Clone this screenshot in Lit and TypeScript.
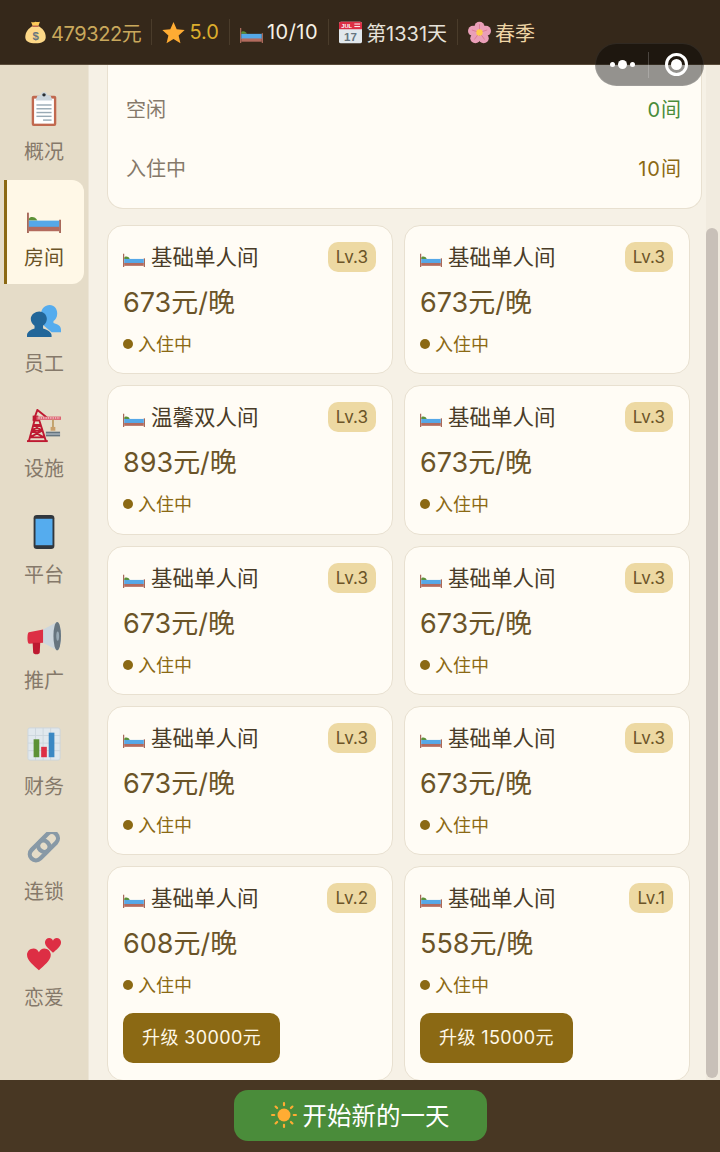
import { LitElement, html, css, svg } from "lit";
import { customElement } from "lit/decorators.js";

const bed = svg`<rect x="0" y="3" width="2" height="23" fill="#a8695a"/><rect x="34" y="11" width="2" height="15" fill="#a8695a"/><path d="M2 10c1-3 7-3 9 2H2z" fill="#5c9136"/><rect x="2" y="12" width="32" height="8" fill="#55a8e8"/><rect x="2" y="19" width="32" height="5" fill="#b36b5e"/>`;
const heart = "M12 22C7 17.500 0 12.500 0 6.500 0 2.800 3 0 6.500 0 9 0 11 1.500 12 4c1-2.500 3-4 5.500-4C21 0 24 2.800 24 6.500c0 6-7 11-12 15.500z";
const icons: Record<string, unknown> = {
  money: svg`<path d="M11 1c2 1.500 4 1 7 0 3 1 5 .5 7 0l-3 8h-8z" fill="#fdcb58"/><path d="M14 8C7 11 2 18 2 25c0 7 6 10 16 10s16-3 16-10c0-7-5-14-12-17z" fill="#fdd888"/><rect x="13" y="7" width="10" height="2.500" rx="1" fill="#bf6952"/><text x="18" y="29" font-size="18" text-anchor="middle" font-family="Liberation Sans" font-weight="700" fill="#67757f">$</text>`,
  star: svg`<path d="M18 1.500l5 11.500 12.500 1.200-9.500 8.300 2.900 12.200L18 28.300 7.100 34.700 10 22.500.5 14.200 13 13z" fill="#ffac33"/>`,
  cal: svg`<rect x="0" y="1" width="36" height="34" rx="3" fill="#e1e8ed"/><path d="M0 13V4a3 3 0 013-3h30a3 3 0 013 3v9z" fill="#dd2e44"/><rect x="24" y="4" width="9" height="1.500" fill="#fff"/><rect x="24" y="8" width="9" height="1.500" fill="#fff"/><text x="12" y="11" font-size="9" text-anchor="middle" font-family="Liberation Sans" font-weight="700" fill="#fff">JUL</text><text x="18" y="31" font-size="18" text-anchor="middle" font-family="Liberation Sans" font-weight="700" fill="#66757f">17</text>`,
  flower: svg`<g fill="#ea9fb8"><circle cx="18" cy="9" r="8"/><circle cx="8" cy="15.500" r="8"/><circle cx="28" cy="15.500" r="8"/><circle cx="11.500" cy="27" r="8"/><circle cx="24.500" cy="27" r="8"/></g><g stroke="#d9738f" stroke-width="1.200"><path d="M18 18V5M18 18L6 14M18 18l12-4M18 18L10 29M18 18l8 11"/></g><circle cx="18" cy="18" r="5" fill="#ffcc4d"/>`,
  clip: svg`<rect x="5" y="4" width="26" height="32" rx="2" fill="#c1694f"/><rect x="7.500" y="7" width="21" height="26.500" fill="#fff"/><path d="M11 4l4-1a3 3 0 016 0l4 1 2 5H9z" fill="#ccd6dd"/><circle cx="18" cy="3" r="1.800" fill="#292f33"/><g fill="#99aab5"><rect x="10" y="13" width="16" height="1.500"/><rect x="10" y="17" width="16" height="1.500"/><rect x="10" y="21" width="16" height="1.500"/><rect x="10" y="25" width="16" height="1.500"/><rect x="17" y="29" width="9" height="1.500"/></g>`,
  staff: svg`<path d="M36 27c0-4-4-6-8-7v-2c2-1 4-4 4-8 0-5-3-9-8-9s-9 4-9 9c0 3 1 6 3 7v6l8 7h10z" fill="#55acee"/><path d="M26 33c0-3-5-6-9-7v-3c2-1 4-4 4-7 0-5-4-8-8-8s-9 3-9 8c0 3 2 6 4 7v3c-4 1-8 4-8 7v2h26z" fill="#226699"/>`,
  crane: svg`<g fill="none" stroke="#be1931" stroke-width="2"><path d="M2 34L8 12h5l7 22M7 17h7M5 23h11M3 30h15M7 17l9 6M14 17l-9 6M5 23l13 7M16 23L3 30"/><path d="M7 12L11 1l10 8"/></g><rect x="0" y="33" width="22" height="2" fill="#be1931"/><rect x="6" y="7" width="6" height="6" fill="#be1931"/><rect x="10" y="8" width="26" height="3.500" fill="#dd5f6f"/><path d="M12 9.500h23" stroke="#fff" stroke-width="1" stroke-dasharray="1.500 1"/><rect x="26.500" y="11" width="2" height="10" fill="#c1a06a"/><rect x="25" y="19" width="5" height="4" fill="#c99f6a"/><rect x="20" y="24" width="15" height="5" fill="#66757f"/><rect x="20" y="26" width="15" height="1" fill="#ccd6dd"/>`,
  phone: svg`<rect x="7" y="0" width="22" height="36" rx="3.500" fill="#31373d"/><rect x="9" y="4" width="18" height="28" fill="#55acee"/>`,
  horn: svg`<path d="M15 10L32 1c2 0 4 7 4 15s-2 15-4 15L15 22z" fill="#ccd6dd"/><ellipse cx="32" cy="16" rx="4" ry="15" fill="#67757f"/><ellipse cx="32.500" cy="16" rx="1.500" ry="5" fill="#99aab5"/><path d="M2 12l15-3 0 14-15 1c-2 0-2-12 0-12z" fill="#dd2e44"/><path d="M6 23h8l-.5 10c0 3-7 3-7 0z" fill="#be1931"/>`,
  chart: svg`<rect x="1" y="1" width="34" height="34" rx="2" fill="#e1e8ed" stroke="#ccd6dd"/><g stroke="#ccd6dd" stroke-width="1"><path d="M1 9h34M1 17h34M1 25h34M9 1v34M17 1v34M25 1v34"/></g><rect x="7" y="13" width="6" height="19" fill="#5c9136"/><rect x="15" y="21" width="6" height="11" fill="#dd2e44"/><rect x="23" y="6" width="6" height="26" fill="#3b88c3"/>`,
  link: svg`<g fill="none" stroke="#8899a6" stroke-width="4.500"><rect x="-3" y="-6.500" width="24" height="13" rx="6.500" transform="translate(7 26) rotate(-45)"/><rect x="-3" y="-6.500" width="24" height="13" rx="6.500" transform="translate(16 17) rotate(-45)"/></g>`,
  love: svg`<path d="${heart}" fill="#dd2e44" transform="translate(0 11) scale(1.050)"/><path d="${heart}" fill="#dd2e44" transform="translate(19 0) scale(.71)"/>`,
  sun: svg`<circle cx="18" cy="18" r="9" fill="#ffac33"/><g fill="#ffac33"><rect x="16.500" y="0" width="3" height="6" rx="1.500"/><rect x="16.500" y="30" width="3" height="6" rx="1.500"/><rect x="0" y="16.500" width="6" height="3" rx="1.500"/><rect x="30" y="16.500" width="6" height="3" rx="1.500"/><rect x="16.500" y="0" width="3" height="6" rx="1.500" transform="rotate(45 18 18)"/><rect x="16.500" y="0" width="3" height="6" rx="1.500" transform="rotate(135 18 18)"/><rect x="16.500" y="0" width="3" height="6" rx="1.500" transform="rotate(225 18 18)"/><rect x="16.500" y="0" width="3" height="6" rx="1.500" transform="rotate(315 18 18)"/></g>`,
};

const icon = (name: string, cls: string) => html`<svg class=${cls} viewBox="0 0 36 36">${icons[name]}</svg>`;
const bedIcon = (cls: string) => html`<svg class=${cls} viewBox="0 0 36 26" preserveAspectRatio="none">${bed}</svg>`;

const NAV = [
  ["clip", "概况"], ["bed", "房间"], ["staff", "员工"], ["crane", "设施"], ["phone", "平台"],
  ["horn", "推广"], ["chart", "财务"], ["link", "连锁"], ["love", "恋爱"],
];

const ROOMS: { name: string; price: number; lv: number; up?: number }[] = [
  { name: "基础单人间", price: 673, lv: 3 }, { name: "基础单人间", price: 673, lv: 3 },
  { name: "温馨双人间", price: 893, lv: 3 }, { name: "基础单人间", price: 673, lv: 3 },
  { name: "基础单人间", price: 673, lv: 3 }, { name: "基础单人间", price: 673, lv: 3 },
  { name: "基础单人间", price: 673, lv: 3 }, { name: "基础单人间", price: 673, lv: 3 },
  { name: "基础单人间", price: 608, lv: 2, up: 30000 }, { name: "基础单人间", price: 558, lv: 1, up: 15000 },
];

@customElement("app-root")
export class AppRoot extends LitElement {
  static styles = css`
    :host { display: block; width: 720px; height: 1152px; position: relative; overflow: hidden;
      font-family: "Inter", "Noto Sans CJK SC", sans-serif; }
    * { box-sizing: border-box; }
    .page { height: 1152px; display: flex; flex-direction: column; background: #f6f1e6; }
    .header { height: 65px; flex: none; background: #35281a; display: flex; align-items: center; padding: 0 0 0 24px; gap: 10px; font-size: 20px; border-bottom: 1px solid #5a4c3a; }
    .stat { display: flex; align-items: center; gap: 4px; white-space: nowrap; height: 26px; }
    .sep { width: 1px; height: 26px; background: #4a3c2b; }
    .hi { width: 23px; height: 25px; flex: none; }
    .hbed { width: 23px; height: 17px; flex: none; margin-top: 4px; }
    .gold { color: #c9a85c; letter-spacing: -.4px; } .yellow { color: #dcae2c; } .white { color: #f6f1e6; letter-spacing: .5px; } .pale { color: #e6e2da; } .spring { color: #efd6a6; }
    .body { flex: 1; min-height: 0; display: flex; }
    .side { width: 88px; flex: none; background: #e5dcc8; padding: 9px 4px 0; display: flex; flex-direction: column; gap: 1.750px; }
    .nav { height: 104px; display: flex; flex-direction: column; align-items: center; padding-top: 18px; color: #85796a; font-size: 20px; line-height: 28px; border-left: 3px solid transparent; border-radius: 0 12px 12px 0; position: relative; }
    .nav.on { background: #fff8e7; color: #6b5428; border-left-color: #8b6914; }
    .ni { width: 34px; height: 34px; margin-bottom: 12px; display: block; margin-left: -3px; }
    .nbed { width: 34px; height: 23px; margin: 12px 0 11px -3px; display: block; }
    .nav span { margin-left: -3px; }
    .main { flex: 1; min-width: 0; overflow: hidden; display: flex; }
    .content { flex: 1; min-width: 0; padding: 0 4px 0 18px; border-left: 1px solid #ece5d6; }
    .panel { height: 144px; background: #fffcf5; border: 1px solid #e8e0d0; border-top: none; border-radius: 0 0 16px 16px; padding: 14px 19px 0 18px; font-size: 20px; color: #85796a; }
    .row { display: flex; justify-content: space-between; height: 59px; align-items: center; }
    .free { color: #4a8c3a; letter-spacing: 1px; } .busy { color: #8b6914; letter-spacing: 1px; }
    .grid { display: grid; grid-template-columns: 286px 286px; column-gap: 11px; row-gap: 11px; margin: 16px 0 0; }
    .card { background: #fffcf5; border: 1px solid #e8e0d0; border-radius: 16px; padding: 16px 16px 17.300px 15px; }
    .top { display: flex; align-items: center; justify-content: space-between; height: 30px; }
    .name { display: flex; align-items: center; gap: 6px; font-size: 21.500px; line-height: 30px; color: #4a3c28; white-space: nowrap; }
    .cbed { width: 22px; height: 15px; margin-top: 5px; flex: none; }
    .lv { background: #edd9a3; color: #6b5428; font-size: 17px; height: 30px; line-height: 30px; padding: 0 8px; border-radius: 10px; }
    .price { font-size: 27px; line-height: 40px; margin-top: 11px; color: #6b5428; white-space: nowrap; }
    .status { display: flex; align-items: center; gap: 5px; margin-top: 7px; height: 26px; font-size: 18px; color: #8b6914; }
    .dot { width: 10px; height: 10px; border-radius: 50%; background: #8b6914; margin-top: 2px; }
    .up { display: inline-block; margin-top: 16px; height: 50px; line-height: 50px; padding: 0 19px; background: #8b6914; color: #fff8e7; border-radius: 10px; font-size: 18px; letter-spacing: .4px; white-space: nowrap; }
    .track { width: 14px; flex: none; background: #f1ebdf; }
    .thumb { width: 12px; height: 850px; margin-top: 163px; background: #c8c0b8; border-radius: 6px; }
    .footer { height: 72px; flex: none; background: #483723; display: flex; justify-content: center; align-items: flex-start; padding-top: 10px; }
    .go { width: 253px; height: 51px; padding-bottom: 2px; background: #4a8c3a; border-radius: 14px; color: #fff; font-size: 24.500px; display: flex; align-items: center; justify-content: center; gap: 6px; }
    .si { width: 26px; height: 26px; }
    .capsule { position: absolute; left: 595px; top: 43px; width: 109px; height: 43px; border-radius: 22px; background: rgba(0,0,0,.42); border: 1px solid rgba(255,255,255,.08); display: flex; align-items: center; }
    .cap-l { flex: 1; display: flex; align-items: center; justify-content: center; gap: 3px; }
    .cap-l i { background: #fff; border-radius: 50%; width: 5px; height: 5px; }
    .cap-l i.b { width: 9px; height: 9px; }
    .cap-sep { width: 1px; height: 26px; background: rgba(255,255,255,.2); }
    .cap-r { width: 54px; display: flex; justify-content: center; }
    .ring { width: 23px; height: 23px; border: 3px solid #fff; border-radius: 50%; display: flex; align-items: center; justify-content: center; }
    .ring b { width: 11px; height: 11px; background: #fff; border-radius: 50%; display: block; }
  `;

  render() {
    return html`<div class="page">
      <div class="header">
        <div class="stat gold">${icon("money", "hi")}479322元</div><div class="sep"></div>
        <div class="stat yellow">${icon("star", "hi")}5.0</div><div class="sep"></div>
        <div class="stat white">${bedIcon("hbed")}10/10</div><div class="sep"></div>
        <div class="stat pale">${icon("cal", "hi")}第1331天</div><div class="sep"></div>
        <div class="stat spring">${icon("flower", "hi")}春季</div>
      </div>
      <div class="body">
        <div class="side">
          ${NAV.map(([i, t]) => html`<div class="nav ${t === "房间" ? "on" : ""}">
            ${i === "bed" ? bedIcon("nbed") : icon(i, "ni")}<span>${t}</span></div>`)}
        </div>
        <div class="main">
          <div class="content">
            <div class="panel">
              <div class="row"><span>空闲</span><span class="free">0间</span></div>
              <div class="row"><span>入住中</span><span class="busy">10间</span></div>
            </div>
            <div class="grid">
              ${ROOMS.map((r) => html`<div class="card">
                <div class="top"><div class="name">${bedIcon("cbed")}${r.name}</div><div class="lv">Lv.${r.lv}</div></div>
                <div class="price">${r.price}元/晚</div>
                <div class="status"><span class="dot"></span>入住中</div>
                ${r.up ? html`<div class="up">升级 ${r.up}元</div>` : ""}
              </div>`)}
            </div>
          </div>
          <div class="track"><div class="thumb"></div></div>
        </div>
      </div>
      <div class="footer"><div class="go">${icon("sun", "si")}开始新的一天</div></div>
      <div class="capsule">
        <div class="cap-l"><i></i><i class="b"></i><i></i></div>
        <div class="cap-sep"></div>
        <div class="cap-r"><div class="ring"><b></b></div></div>
      </div>
    </div>`;
  }
}
